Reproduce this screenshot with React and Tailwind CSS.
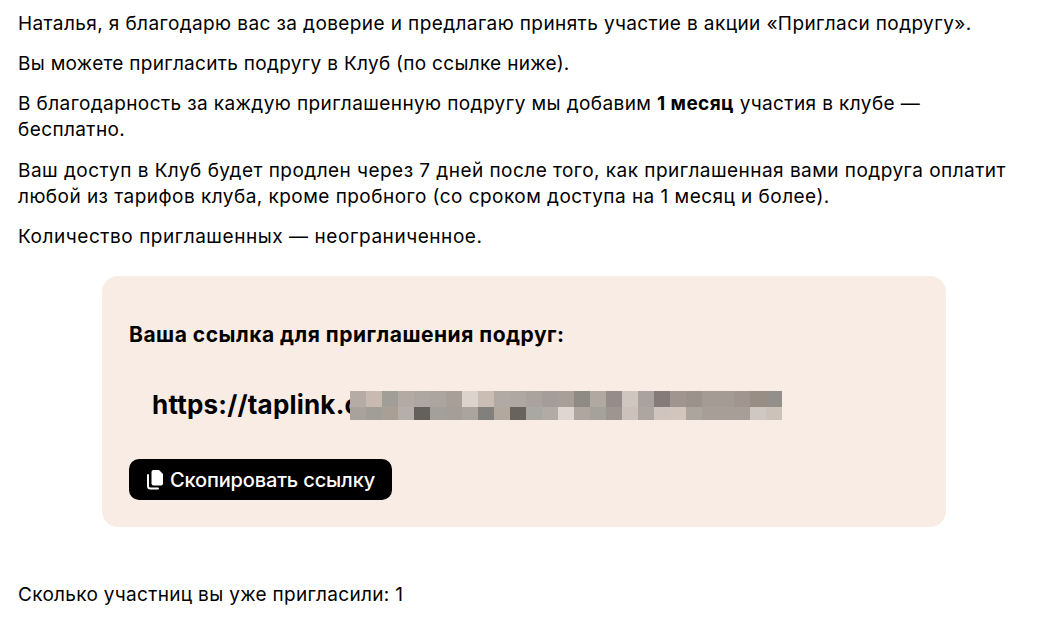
const row1 = [
  "bg-[#b5aca6]", "bg-[#c8bab1]", "bg-[#a19e98]", "bg-[#b3aaa4]", "bg-[#aea6a0]", "bg-[#aca49f]", "bg-[#a79f98]", "bg-[#dcd3cc]", "bg-[#cabdb4]",
  "bg-[#b1a9a3]", "bg-[#afa7a1]", "bg-[#aaa29c]", "bg-[#a59d9a]", "bg-[#a89f98]", "bg-[#8e8a84]", "bg-[#b0a8a1]", "bg-[#968d8a]", "bg-[#d0c6c0]",
  "bg-[#aaa29e]", "bg-[#857b78]", "bg-[#a0958f]", "bg-[#9c928c]", "bg-[#a49b95]", "bg-[#a49b95]", "bg-[#a0968f]", "bg-[#998e86]", "bg-[#93908b]",
];
const row2 = [
  "bg-[#a9a19b]", "bg-[#a19e98]", "bg-[#a99f95]", "bg-[#b5aeaa]", "bg-[#64605b]", "bg-[#a3a09b]", "bg-[#a59d97]", "bg-[#aba39e]", "bg-[#82807c]",
  "bg-[#b2a89e]", "bg-[#68635d]", "bg-[#aaa8a3]", "bg-[#b2aaa5]", "bg-[#e0d6d1]", "bg-[#afa69f]", "bg-[#a5a29c]", "bg-[#9e9590]", "bg-[#cdc1bb]",
  "bg-[#ada59f]", "bg-[#cfc5be]", "bg-[#d1c5bc]", "bg-[#aca59e]", "bg-[#a79e98]", "bg-[#a79e98]", "bg-[#a79e98]", "bg-[#cfc8c2]", "bg-[#cdc2ba]",
];

export default function App() {
  return (
    <div className="min-h-[639px] overflow-hidden bg-white pl-[18px] pr-6 pt-[11px] text-[19px] leading-[26px] tracking-[0.4px] text-black font-['Inter','Liberation_Sans',sans-serif]">
      <p className="mb-[14px]">Наталья, я благодарю вас за доверие и предлагаю принять участие в акции «Пригласи подругу».</p>
      <p className="mb-[14px] tracking-[0.3px]">Вы можете пригласить подругу в Клуб (по ссылке ниже).</p>
      <p className="mb-[15px]">В благодарность за каждую приглашенную подругу мы добавим <b>1 месяц</b> участия в клубе — бесплатно.</p>
      <p className="mb-[14px] tracking-[0.46px]">Ваш доступ в Клуб будет продлен через 7 дней после того, как приглашенная вами подруга оплатит любой из тарифов клуба, кроме пробного (со сроком доступа на 1 месяц и более).</p>
      <p className="tracking-[0.55px]">Количество приглашенных — неограниченное.</p>

      <div className="ml-[84px] mt-[26px] h-[251px] w-[844px] rounded-2xl bg-[#f9ece5] px-[27px] pt-[45px]">
        <h3 className="text-[21px] font-bold leading-[28px] tracking-[0.5px]">Ваша ссылка для приглашения подруг:</h3>
        <div className="relative mt-[37px] ml-[23px] h-[38px]">
          <span className="whitespace-nowrap text-[26px] font-bold leading-[38px] tracking-[0.2px]">https://taplink.c</span>
          <div className="absolute left-[198px] top-[5px] flex flex-col">
            <div className="flex">
              {row1.map((c, i) => <div key={i} className={`h-4 w-4 ${c}`} />)}
            </div>
            <div className="flex">
              {row2.map((c, i) => <div key={i} className={`h-[13px] w-4 ${c}`} />)}
            </div>
          </div>
        </div>
        <button className="mt-[35px] flex h-[41px] w-[263px] items-center justify-center gap-[6px] rounded-[10px] bg-black text-[20px] font-medium tracking-[-0.15px] text-white">
          <svg width="18" height="21" viewBox="0 0 18 21" fill="none">
            <path d="M2 6v11a2.5 2.5 0 0 0 2.5 2.5H12" stroke="white" strokeWidth="2" strokeLinecap="round" />
            <path d="M7.5 1H13l4 4v9.5a2 2 0 0 1-2 2H7.5a2 2 0 0 1-2-2V3a2 2 0 0 1 2-2z" fill="white" />
          </svg>
          Скопировать ссылку
        </button>
      </div>

      <p className="mt-[55px] tracking-[0.32px]">Сколько участниц вы уже пригласили: 1</p>
    </div>
  );
}
